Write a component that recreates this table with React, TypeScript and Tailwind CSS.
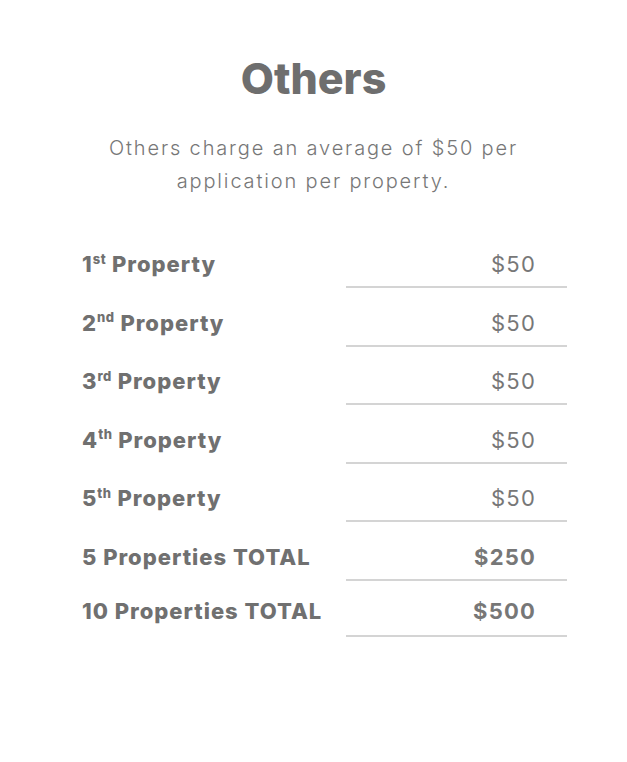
import React from "react";

const rows: { n: string; sup?: string; label: string; price: string; bold?: boolean }[] = [
  { n: "1", sup: "st", label: "Property", price: "$50" },
  { n: "2", sup: "nd", label: "Property", price: "$50" },
  { n: "3", sup: "rd", label: "Property", price: "$50" },
  { n: "4", sup: "th", label: "Property", price: "$50" },
  { n: "5", sup: "th", label: "Property", price: "$50" },
  { n: "5", label: "Properties TOTAL", price: "$250", bold: true },
  { n: "10", label: "Properties TOTAL", price: "$500", bold: true },
];

export default function App() {
  return (
    <div className="min-h-[762px] w-[627px] bg-white text-[#707070]" style={{ fontFamily: "Inter, 'Liberation Sans', sans-serif" }}>
      <div className="pt-[53px] flex flex-col items-center">
        <h1 className="text-[43px] leading-[50px] font-extrabold tracking-[0px] text-[#6e6e6e]">Others</h1>
        <p className="mt-[29px] w-[470px] text-center text-[20px] leading-[33px] font-light tracking-[1.85px] text-[#777]">
          Others charge an average of $50 per application per property.
        </p>
      </div>
      <div className="pl-[82px] mt-[51px]">
        {rows.map((r, i) => {
          const last = i === rows.length - 1;
          return (
            <div key={i} className="flex items-end">
              <div className={`w-[264px] ${last ? "pb-[11px]" : "pb-[9px]"} text-[22px] leading-[30px] font-extrabold tracking-[1px] text-[#707070]`}>
                {r.n}
                {r.sup && <sup className="text-[13px] top-[-0.65em] font-extrabold tracking-[0.5px]">{r.sup}</sup>}
                {" "}{r.label}
              </div>
              <div
                className={`w-[221px] border-b-2 border-[#d4d4d4] pr-[31px] text-right text-[22px] leading-[30px] tracking-[1.2px] text-[#777] ${
                  i === 0 ? "pt-[0px]" : last ? "pt-[15px]" : "pt-[19.5px]"
                } ${last ? "pb-[9px]" : "pb-[7px]"} ${r.bold ? "font-bold" : "font-normal"}`}
              >
                {r.price}
              </div>
            </div>
          );
        })}
      </div>
    </div>
  );
}
